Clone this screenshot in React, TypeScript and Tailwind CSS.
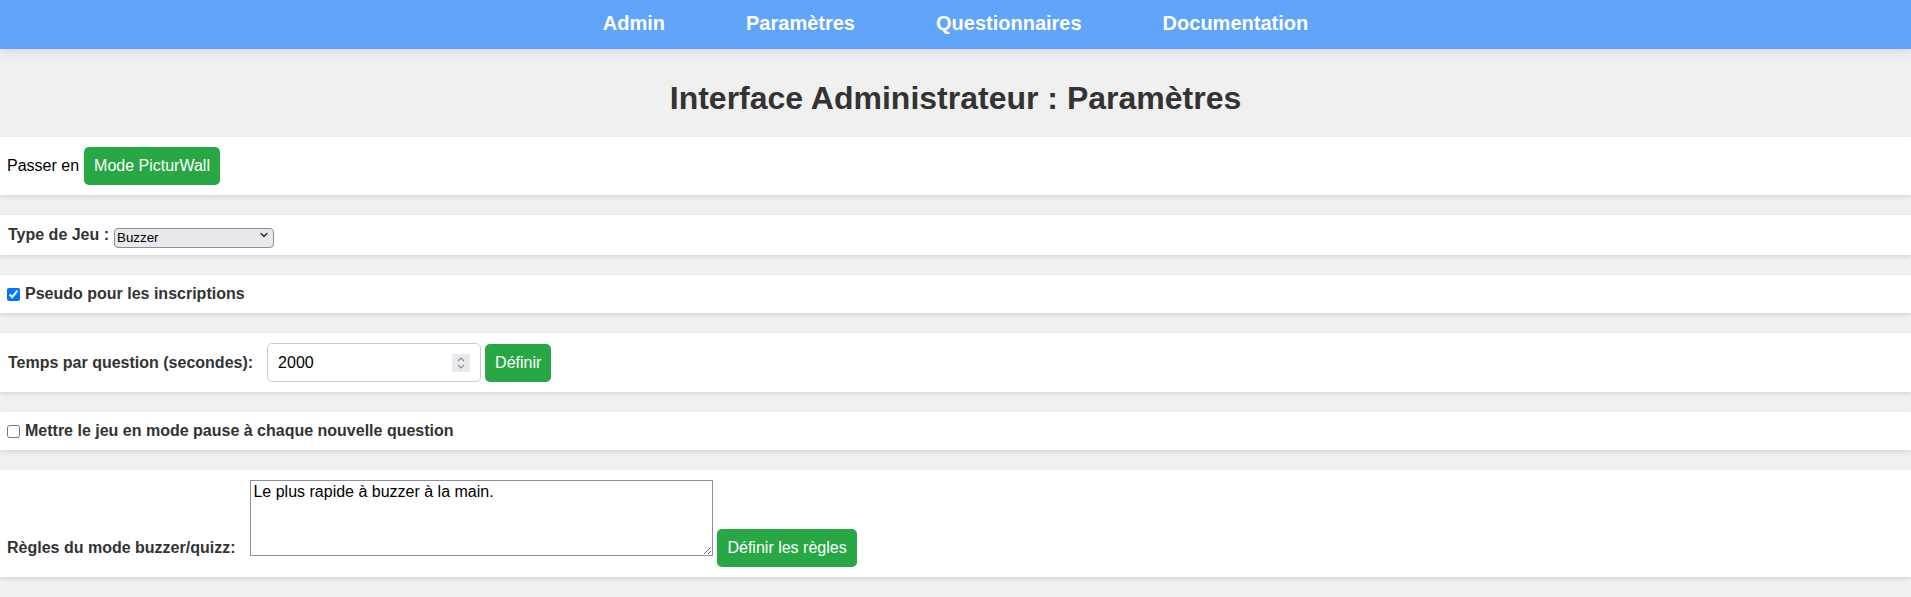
import { useState } from 'react'

const NAV = ['Admin', 'Paramètres', 'Questionnaires', 'Documentation']

const card = 'bg-white shadow-[0_2px_4px_rgba(0,0,0,0.1)] mb-[20px] py-[10px] px-[7px] flex'
const greenBtn = 'bg-[#28a745] text-white text-[16px] leading-[18px] px-[10px] py-[10px] rounded-[5px] shrink-0'

export default function App() {
  const [jeu, setJeu] = useState('buzzer')
  const [temps, setTemps] = useState('2000')
  const [regles, setRegles] = useState('Le plus rapide à buzzer à la main.')

  return (
    <div className="min-h-[597px] bg-[#f0f0f0] font-['Liberation_Sans',Arial,sans-serif] text-[#333]">
      {/* Nav */}
      <header className="h-[49px] bg-[#60a5fa] flex items-center justify-center gap-[81px] shadow-[0_2px_10px_rgba(0,0,0,0.12)] relative z-10">
        {NAV.map((n) => (
          <a key={n} href="#" className="text-white font-bold text-[20px] leading-[23px] translate-y-[-1px]">
            {n}
          </a>
        ))}
      </header>

      <h1 className="text-center text-[32px] leading-[37px] font-bold text-[#333] pt-[31px] pb-[20px]">
        Interface Administrateur : Paramètres
      </h1>

      {/* PicturWall */}
      <div className={`${card} items-center`}>
        <span className="text-[16px] text-black mr-[5px]">Passer en</span>
        <button className={greenBtn}>Mode PicturWall</button>
      </div>

      {/* Type de jeu */}
      <div className={`${card} items-center`}>
        <label className="font-bold text-[16px] leading-[18px] mr-[5px] ml-[1px]">Type de Jeu :</label>
        <div className="relative w-[160px] h-[20px]">
          <select
            value={jeu}
            onChange={(e) => setJeu(e.target.value)}
            className="appearance-none w-full h-full bg-[#e9e9ed] border border-[#8f8f9d] rounded-[4px] pl-[2px] text-[13.33px] leading-[16px] text-black outline-none"
          >
            <option value="buzzer">Buzzer</option>
            <option value="quizz">Quizz</option>
          </select>
          <svg className="absolute right-[6px] top-[6px] pointer-events-none" width="8" height="8" viewBox="0 0 8 8" fill="none">
            <path d="M1 2.5 L4 5.5 L7 2.5" stroke="#222" strokeWidth="1.3" strokeLinecap="round" strokeLinejoin="round" />
          </svg>
        </div>
      </div>

      {/* Pseudo */}
      <div className={`${card} items-center`}>
        <input type="checkbox" defaultChecked className="m-0 w-[13px] h-[13px] accent-[#0075ff] shrink-0" />
        <label className="font-bold text-[16px] leading-[18px] ml-[5px]">Pseudo pour les inscriptions</label>
      </div>

      {/* Temps */}
      <div className={`${card} items-center`}>
        <label className="font-bold text-[16px] leading-[18px] ml-[1px]">Temps par question (secondes):</label>
        <div className="relative ml-[14px]">
          <input
            type="text"
            value={temps}
            onChange={(e) => setTemps(e.target.value)}
            className="w-[214px] h-[39px] border border-[#ccc] rounded-[5px] px-[10px] text-[16px] text-black bg-white outline-none"
          />
          <svg className="absolute left-[185px] top-[11px] pointer-events-none" width="18" height="18" viewBox="0 0 18 18">
            <rect width="18" height="18" fill="#e9e9ed" />
            <path d="M6 7 L9 4 L12 7" stroke="#8a8a92" strokeWidth="1.1" fill="none" />
            <path d="M6 11 L9 14 L12 11" stroke="#8a8a92" strokeWidth="1.1" fill="none" />
          </svg>
        </div>
        <button className={`${greenBtn} ml-[4px]`}>Définir</button>
      </div>

      {/* Pause */}
      <div className={`${card} items-center`}>
        <input type="checkbox" className="m-0 w-[13px] h-[13px] accent-[#0075ff] shrink-0" />
        <label className="font-bold text-[16px] leading-[18px] ml-[5px]">
          Mettre le jeu en mode pause à chaque nouvelle question
        </label>
      </div>

      {/* Règles */}
      <div className={`${card} items-end`}>
        <label className="font-bold text-[16px] leading-[18px] mb-[10px] shrink-0">Règles du mode buzzer/quizz:</label>
        <textarea
          value={regles}
          onChange={(e) => setRegles(e.target.value)}
          className="ml-[15px] mb-[11px] w-[463px] h-[76px] border border-[#8f8f9d] p-[2px] text-[16px] leading-[18px] text-black bg-white outline-none shrink-0"
        />
        <button className={`${greenBtn} ml-[4px]`}>Définir les règles</button>
      </div>
    </div>
  )
}
